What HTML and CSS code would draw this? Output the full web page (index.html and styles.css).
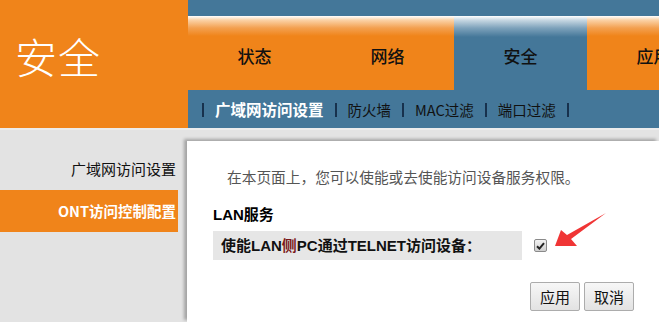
FILE: index.html
```html
<html>
  <head>
    <meta charset="UTF-8">
    <title>安全</title>
    <link rel="stylesheet" href="styles.css">
  </head>
  <body>
    <div class="header">
      <div class="logo">安全</div>
      <div class="nav">
        <div class="topline"></div>
        <div class="tabs">
          <div class="tab">状态</div>
          <div class="tab">网络</div>
          <div class="tab tab-on">安全</div>
          <div class="tab">应用</div>
        </div>
        <div class="subnav">
          <span class="sep"></span><span class="sub sub-on">广域网访问设置</span>
          <span class="sep"></span><span class="sub">防火墙</span>
          <span class="sep"></span><span class="sub">MAC过滤</span>
          <span class="sep"></span><span class="sub">端口过滤</span>
          <span class="sep"></span>
        </div>
      </div>
    </div>

    <div class="main">
      <ul class="side">
        <li>广域网访问设置</li>
        <li class="side-on">ONT访问控制配置</li>
      </ul>

      <div class="panel">
        <p class="intro">在本页面上，您可以使能或去使能访问设备服务权限。</p>
        <h3 class="title">LAN服务</h3>
        <div class="line">
          <div class="label">使能LAN<span class="red">侧</span>PC通过TELNET访问设备：</div>
          <span class="check">
            <svg width="9" height="8" viewBox="0 0 9 8"><path d="M1 4.2 L3.4 6.6 L8 1.2" fill="none" stroke="#222" stroke-width="2"/></svg>
          </span>
        </div>
        <div class="btns">
          <button class="btn">应用</button>
          <button class="btn">取消</button>
        </div>

        <!-- 矢印 -->
        <svg class="arrow" width="62" height="45" viewBox="0 0 62 45">
          <polygon points="7,39 13,23 19,28 58,6 23,32 29,39" fill="#f03535"/>
        </svg>
      </div>
    </div>
  </body>
</html>
```

FILE: styles.css
```css
body {
  margin: 0;
  background: #e3e3e3;
  font-family: 'Liberation Sans', 'Noto Sans CJK SC', sans-serif;
  overflow: hidden;
}

.header {
  display: flex;
  height: 128px;
  border-bottom: 2px solid #ececec;
}

.logo {
  width: 173px;
  padding-left: 15px;
  background: #f0841a;
  color: #fff;
  font-family: 'Noto Sans CJK SC', sans-serif;
  font-weight: 300;
  font-size: 42px;
  line-height: 112px;
  letter-spacing: 1px;
}

.nav {
  flex: 1;
  background: #447799;
  overflow: hidden;
}

.topline {
  height: 16px;
}

.tabs {
  display: flex;
  height: 74px;
}

.tab {
  flex: 0 0 133px;
  box-sizing: border-box;
  padding-top: 6px;
  text-align: center;
  line-height: 68px;
  font-family: 'Noto Sans CJK SC', sans-serif;
  font-size: 17px;
  font-weight: 500;
  color: #111;
  background: linear-gradient(#fff 0, #fbd3a8 4px, #f3a050 12px, #f0841a 20px);
}

.tab-on {
  background: linear-gradient(#fff 0, #c8d8e3 4px, #7ea2bb 12px, #447799 21px);
}

.subnav {
  height: 38px;
  display: flex;
  align-items: center;
  padding-left: 3px;
  font-family: 'Noto Sans CJK SC', sans-serif;
}

.sep {
  display: inline-block;
  width: 2px;
  height: 14px;
  margin: 2px 11px 0;
  background: #17314d;
}

.sub {
  font-size: 14.5px;
  color: #111;
}

.sub-on {
  font-size: 15.5px;
  font-weight: 700;
  color: #fff;
}

.main {
  display: flex;
  height: 192px;
}

.side {
  list-style: none;
  margin: 0;
  padding: 18px 0 0;
  width: 178px;
}

.side li {
  height: 42px;
  line-height: 42px;
  text-align: right;
  padding-right: 2px;
  font-family: 'Noto Sans CJK SC', sans-serif;
  font-size: 15px;
  color: #111;
}

.side .side-on {
  background: #f0841a;
  color: #fff;
  font-weight: 700;
  font-size: 14.5px;
}

.panel {
  position: relative;
  flex: 1;
  margin: 11px 0 0 9px;
  padding: 26px 25px 0 26px;
  background: #fff;
  box-shadow: -3px -2px 3px rgba(0, 0, 0, 0.28);
}

.intro {
  margin: 0 0 16px;
  padding-left: 14px;
  line-height: 22px;
  font-size: 14.7px;
  color: #555;
}

.title {
  margin: 0 0 6px;
  line-height: 20px;
  font-size: 15px;
  font-weight: 700;
  color: #000;
}

.line {
  display: flex;
  align-items: center;
}

.label {
  box-sizing: border-box;
  width: 309px;
  height: 29px;
  line-height: 29px;
  padding-left: 8px;
  background: #e6e6e6;
  font-size: 15px;
  font-weight: 700;
  color: #111;
}

.red {
  color: #7a1818;
}

.check {
  box-sizing: border-box;
  width: 13px;
  height: 13px;
  margin-left: 12px;
  border: 1px solid #8a8a8a;
  border-radius: 2px;
  background: linear-gradient(#f2f2f2, #cfcfcf);
  display: flex;
  align-items: center;
  justify-content: center;
}

.btns {
  display: flex;
  justify-content: flex-end;
  gap: 4px;
  margin-top: 22px;
}

.btn {
  box-sizing: border-box;
  width: 50px;
  height: 29px;
  padding: 0;
  border: 1px solid #acacac;
  border-radius: 2px;
  background: linear-gradient(#f7f7f7, #e2e2e2);
  font-family: 'Noto Sans CJK SC', sans-serif;
  font-size: 15px;
  color: #111;
}

.arrow {
  position: absolute;
  left: 361px;
  top: 66px;
}
```
